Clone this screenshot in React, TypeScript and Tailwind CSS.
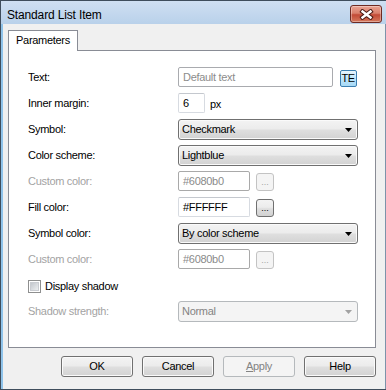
import React from "react";

function Arrow({ disabled }: { disabled?: boolean }) {
  return (
    <svg width="7" height="4" viewBox="0 0 7 4" className="shrink-0">
      <path d="M0 0h7L3.5 4z" fill={disabled ? "#a2a2a2" : "#000"} />
    </svg>
  );
}

function Select({ value, disabled }: { value: string; disabled?: boolean }) {
  return (
    <div
      className={
        disabled
          ? "w-[180px] h-[21px] flex items-center pl-[3px] pr-[5px] rounded-[3px] border border-[#b5b9bc] bg-[#f4f4f4] text-[#838383]"
          : "w-[180px] h-[21px] flex items-center pl-[3px] pr-[5px] rounded-[3px] border border-[#707070] bg-[linear-gradient(#f3f3f3,#ececec_45%,#dedede_55%,#d2d2d2)] shadow-[inset_0_0_0_1px_#fafafa]"
      }
    >
      <span className="flex-1">{value}</span>
      <Arrow disabled={disabled} />
    </div>
  );
}

function TextBox({
  value,
  width,
  kind,
}: {
  value: string;
  width: string;
  kind: "dark" | "light" | "disabled";
}) {
  const cls =
    kind === "light"
      ? "border-[#d7dbe1] border-t-[#c4c8ce] text-black"
      : kind === "disabled"
        ? "border-[#a9a9a9] text-[#8a8a8a]"
        : "border-[#a9abaf] text-[#8c8c8c]";
  return (
    <div className={`${width} h-[20px] flex items-center pl-[4px] rounded-[2px] border bg-white ${cls}`}>
      {value}
    </div>
  );
}

function Dots({ disabled }: { disabled?: boolean }) {
  return (
    <div
      className={
        disabled
          ? "ml-[6px] mt-[2px] w-[18px] h-[18px] rounded-[3px] border border-[#c3c3c3] bg-[#f4f4f4] text-[#a5a5a5] flex items-end justify-center pb-[3px] text-[9px] leading-none tracking-[0px]"
          : "ml-[6px] mt-[2px] w-[18px] h-[18px] rounded-[3px] border border-[#707070] bg-[linear-gradient(#f3f3f3,#ececec_45%,#dedede_55%,#d2d2d2)] text-black flex items-end justify-center pb-[3px] text-[9px] leading-none tracking-[0px]"
      }
    >
      ...
    </div>
  );
}

function Row({
  label,
  disabled,
  children,
}: {
  label: string;
  disabled?: boolean;
  children: React.ReactNode;
}) {
  return (
    <div className="flex h-[21px]">
      <div className={disabled ? "w-[150px] flex items-center pb-[1px] text-[#a3a3a3]" : "w-[150px] flex items-center pb-[1px]"}>
        {label}
      </div>
      <div className="flex items-start">{children}</div>
    </div>
  );
}

function Button({ children, disabled }: { children: React.ReactNode; disabled?: boolean }) {
  return (
    <div
      className={
        disabled
          ? "w-[72px] h-[21px] flex items-center justify-center rounded-[3px] border border-[#b5b9bc] bg-[#f4f4f4] text-[#838383]"
          : "w-[72px] h-[21px] flex items-center justify-center rounded-[3px] border border-[#707070] bg-[linear-gradient(#f3f3f3,#ececec_45%,#dedede_55%,#d2d2d2)] shadow-[inset_0_0_0_1px_#fafafa]"
      }
    >
      {children}
    </div>
  );
}

export default function App() {
  return (
    <div className="w-[386px] h-[390px] flex flex-col overflow-hidden bg-[#8fc3ea] border-l border-t border-b border-[#3f4d5c] font-['Liberation_Sans',Arial,sans-serif] text-[11px] tracking-[-0.3px] text-black">
      {/* Title bar */}
      <div className="h-[25px] flex items-start pl-[6px] pr-[4px] bg-[linear-gradient(#cfdff2,#b9d1ea)]">
        <span className="mt-[5px] text-[12px] tracking-[-0.15px]">Standard List Item</span>
        <div className="ml-auto mt-[4px] w-[32px] h-[18px] rounded-[3px] border border-[#6e2a22] bg-[linear-gradient(#eba393,#d9806c_45%,#c24a36_55%,#d4785c)] shadow-[inset_0_0_0_1px_rgba(255,255,255,0.35)] flex items-center justify-center">
          <svg width="15" height="11" viewBox="0 0 15 11">
            <path d="M3.5 2.5l8 6M11.5 2.5l-8 6" stroke="#4a1a14" strokeWidth="4.4" strokeLinecap="square" />
            <path d="M3.5 2.5l8 6M11.5 2.5l-8 6" stroke="#fff" strokeWidth="2.4" strokeLinecap="square" />
          </svg>
        </div>
      </div>

      {/* Client area */}
      <div className="flex">
        <div className="ml-[2px] w-[377px] h-[362px] bg-[#f0f0f0] border-r border-[#7d93aa] box-content flex flex-col pt-[6px] pl-[5px]">
          {/* Tab */}
          <div className="relative z-10 -mb-px w-[70px] h-[21px] bg-white border border-b-0 border-[#898c95] flex items-center justify-center pb-[1px]">
            Parameters
          </div>

          {/* Panel */}
          <div className="w-[368px] h-[298px] bg-white border border-[#898c95] pt-[16px] pl-[19px] flex flex-col">
            <div className="flex flex-col gap-[5px]">
              <Row label="Text:">
                <TextBox value="Default text" width="w-[155px]" kind="dark" />
                <div className="ml-[7px] mt-[3px] w-[17px] h-[17px] rounded-[2px] border border-[#3c7fb1] bg-[linear-gradient(#eaf6fd,#bee6fd_50%,#a7d9f5)] flex items-center justify-center leading-none tracking-[-0.6px] pr-[1px]">
                  TE
                </div>
              </Row>
              <Row label="Inner margin:">
                <TextBox value="6" width="w-[27px]" kind="light" />
                <span className="ml-[5px] mt-[3px]">px</span>
              </Row>
              <Row label="Symbol:">
                <Select value="Checkmark" />
              </Row>
              <Row label="Color scheme:">
                <Select value="Lightblue" />
              </Row>
              <Row label="Custom color:" disabled>
                <TextBox value="#6080b0" width="w-[72px]" kind="disabled" />
                <Dots disabled />
              </Row>
              <Row label="Fill color:">
                <TextBox value="#FFFFFF" width="w-[72px]" kind="light" />
                <Dots />
              </Row>
              <Row label="Symbol color:">
                <Select value="By color scheme" />
              </Row>
              <Row label="Custom color:" disabled>
                <TextBox value="#6080b0" width="w-[72px]" kind="disabled" />
                <Dots disabled />
              </Row>
            </div>

            <div className="mt-[10px] h-[13px] flex items-center">
              <div className="w-[13px] h-[13px] border border-[#8e8f8f] bg-white p-[1px]">
                <div className="w-full h-full border border-[#c9ccd1] bg-[linear-gradient(135deg,#c3c7cd,#eceef0)]" />
              </div>
              <span className="ml-[4px]">Display shadow</span>
            </div>

            <div className="mt-[8px]">
              <Row label="Shadow strength:" disabled>
                <Select value="Normal" disabled />
              </Row>
            </div>
          </div>

          {/* Buttons */}
          <div className="mt-[8px] w-[368px] flex justify-end gap-[9px]">
            <Button>OK</Button>
            <Button>Cancel</Button>
            <Button disabled>
              <span>
                <span className="underline">A</span>pply
              </span>
            </Button>
            <Button>Help</Button>
          </div>
        </div>
      </div>
      <div className="flex-1" />
    </div>
  );
}
